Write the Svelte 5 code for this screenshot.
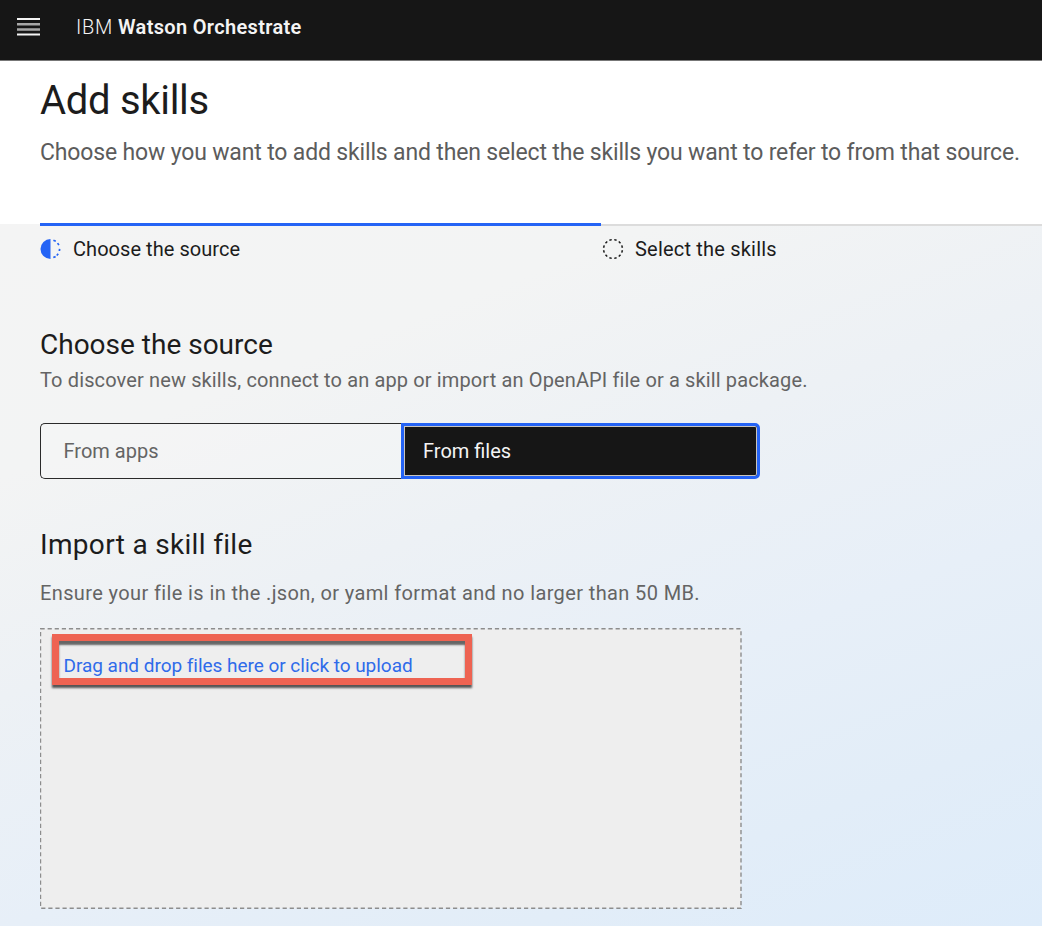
<script>
  const steps = [
    { label: 'Choose the source', current: true },
    { label: 'Select the skills', current: false }
  ];
  const dots = Array.from({ length: 12 }, (_, i) => i * 30 + 15);
</script>

<div class="page">
  <header class="topbar">
    <svg class="menu" width="24" height="20" viewBox="0 0 24 20" aria-hidden="true">
      <path d="M0 2h23M0 17.5h23" stroke="#f4f4f4" stroke-width="1.8" />
      <path d="M0 7.2h23M0 12.5h23" stroke="#a8a8a8" stroke-width="2.6" />
    </svg>
    <span class="ibm">IBM</span>
    <span class="product">Watson Orchestrate</span>
  </header>

  <section class="intro">
    <h1>Add skills</h1>
    <p>Choose how you want to add skills and then select the skills you want to refer to from that source.</p>
  </section>

  <main>
    <ol class="steps">
      {#each steps as step}
        <li class:current={step.current}>
          <svg width="22" height="22" viewBox="0 0 22 22" aria-hidden="true">
            {#if step.current}
              <path d="M10.5 1a10 10 0 0 0 0 20z" fill="#2463f5" />
              <g fill="none" stroke="#2463f5" stroke-width="1.7">
                <path d="M13.4 2.2l2.4 1.1M17.6 5.1l1.3 2M19.6 10.8l-.2 2.2M18.2 15.8l-1.4 1.7M15.6 18.6l-2.3.9" />
              </g>
            {:else}
              <g stroke="#161616" stroke-width="1.5">
                {#each dots as angle}
                  <path d="M9.8 1.6h2.4" transform="rotate({angle} 11 11)" />
                {/each}
              </g>
            {/if}
          </svg>
          <span>{step.label}</span>
        </li>
      {/each}
    </ol>

    <h2 class="source-title">Choose the source</h2>
    <p class="source-text">To discover new skills, connect to an app or import an OpenAPI file or a skill package.</p>

    <div class="switcher">
      <button class="apps">From apps</button>
      <button class="files">From files</button>
    </div>

    <h2 class="import-title">Import a skill file</h2>
    <p class="import-text">Ensure your file is in the .json, or yaml format and no larger than 50 MB.</p>

    <div class="dropzone">
      <svg class="outline" width="702" height="282" aria-hidden="true">
        <rect x="0.5" y="0.75" width="700.5" height="279.5" fill="#eeeeee" stroke="#8d8d8d" stroke-width="1.4" stroke-dasharray="4.2 2.9" />
      </svg>
      <div class="highlight"><span>Drag and drop files here or click to upload</span></div>
    </div>
  </main>
</div>

<style>
  .page {
    width: 1042px;
    height: 926px;
    overflow: hidden;
    display: flex;
    flex-direction: column;
    box-sizing: border-box;
    font-family: Roboto, "Liberation Sans", sans-serif;
    color: #1c1c1c;
    font-size: 20px;
    background: #fff;
  }
  h1, h2, p, ol { margin: 0; padding: 0; font-weight: 400; white-space: nowrap; }
  .topbar {
    flex: none;
    box-sizing: border-box;
    height: 61px;
    padding: 0 0 6px 17px;
    display: flex;
    align-items: center;
    background: #161616;
    border-bottom: 1px solid #777;
    color: #f4f4f4;
    line-height: 28px;
  }
  .menu { margin-right: 35px; }
  .ibm { width: 42px; font-weight: 300; letter-spacing: 0.7px; }
  .product { font-weight: 600; letter-spacing: 0.33px; }
  .intro { flex: none; box-sizing: border-box; height: 163px; padding: 16px 0 0 40px; }
  h1 { font-size: 40px; line-height: 48px; letter-spacing: -0.3px; }
  .intro p { margin-top: 12px; font-size: 23px; line-height: 32px; color: #5c5c5c; letter-spacing: -0.16px; }
  main {
    flex: 1;
    padding-left: 40px;
    background: linear-gradient(159deg, #f4f4f4 0%, #f3f4f4 23%, #edf1f5 43%, #e7eff8 64%, #e2edf8 82%, #deecfa 100%);
  }
  .steps { display: flex; list-style: none; height: 40px; }
  li {
    flex: 0 0 561px;
    display: flex;
    gap: 12px;
    box-sizing: border-box;
    border-top: 2px solid #dcdcdc;
    padding-top: 11px;
    line-height: 24px;
    letter-spacing: 0.2px;
  }
  li.current { gap: 11px; border-top: 3px solid #2463f5; margin-top: -1px; height: 40px; letter-spacing: 0.05px; }
  li svg { flex: none; margin-top: 1px; }
  li:not(.current) svg { margin-left: 0.5px; margin-right: -0.5px; }
  h2 { font-size: 28px; line-height: 36px; }
  .source-title { margin-top: 63px; }
  .source-text, .import-text { color: #646464; line-height: 28px; }
  .source-text { margin-top: 3px; letter-spacing: 0.13px; }
  .switcher { display: flex; margin-top: 29px; height: 56px; width: 720px; }
  button {
    font: inherit;
    text-align: left;
    box-sizing: border-box;
    height: 56px;
    margin: 0;
    line-height: 24px;
  }
  .apps {
    width: 361px;
    padding: 0 0 0 22.5px;
    border: 2px solid #2a2a2a;
    border-width: 1.5px 0 1.5px 1.5px;
    border-radius: 5px 0 0 5px;
    color: #646464;
    background: rgba(255, 255, 255, .15);
  }
  .files {
    width: 359px;
    padding: 0 0 0 19px;
    border: 3px solid #2463f5;
    border-radius: 0 5px 5px 0;
    background: #161616;
    box-shadow: inset 0 0 0 1px #c9c5be;
    color: #f4f4f4;
  }
  .import-title { margin-top: 48px; letter-spacing: 0.32px; }
  .import-text { margin-top: 16px; letter-spacing: 0.38px; }
  .dropzone { position: relative; margin-top: 21px; width: 702px; height: 282px; }
  .outline { display: block; }
  .highlight {
    position: absolute;
    left: 12px;
    top: 6px;
    width: 420px;
    height: 51px;
    box-sizing: border-box;
    border: 7px solid #ee6352;
    padding: 13px 0 0 4.5px;
    color: #2f6bea;
    font-size: 19px;
    line-height: 24px;
    letter-spacing: -0.03px;
    white-space: nowrap;
    box-shadow: 0 3px 2px #555, inset 0 4px 2px #666;
  }
</style>
